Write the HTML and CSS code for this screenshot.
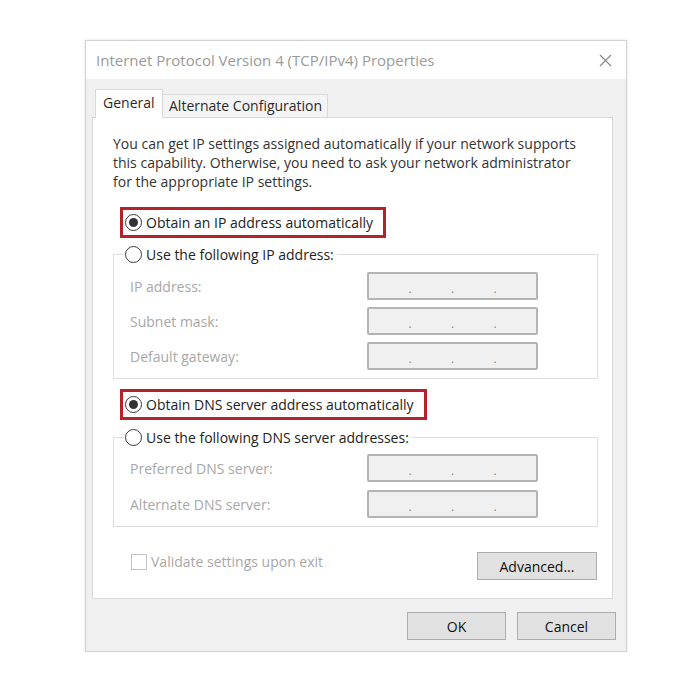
FILE: index.html
```html
<!DOCTYPE html>
<html>
<head>
    <title>Internet Protocol Version 4 (TCP/IPv4) Properties</title>
    <link rel="stylesheet" href="styles.css">
</head>
<body>
    <div class="dialog">
        <div class="titlebar">
            <span class="title">Internet Protocol Version 4 (TCP/IPv4) Properties</span>
            <svg class="close" width="13" height="13" viewBox="0 0 13 13">
                <path d="M1 1 L12 12 M12 1 L1 12" stroke="#8c8c8c" stroke-width="1.3" fill="none"/>
            </svg>
        </div>

        <div class="body">
            <div class="tabs">
                <div class="tab active">General</div>
                <div class="tab">Alternate Configuration</div>
            </div>

            <div class="panel">
                <p class="intro">You can get IP settings assigned automatically if your network supports<br>this capability. Otherwise, you need to ask your network administrator<br>for the appropriate IP settings.</p>

                <div class="choice"><span class="radio checked"></span>Obtain an IP address automatically</div>

                <fieldset class="group">
                    <legend><span class="radio"></span>Use the following IP address:</legend>
                    <div class="rows">
                        <span class="label">IP address:</span>
                        <span class="ip"><i>.</i><i>.</i><i>.</i></span>
                        <span class="label">Subnet mask:</span>
                        <span class="ip"><i>.</i><i>.</i><i>.</i></span>
                        <span class="label">Default gateway:</span>
                        <span class="ip"><i>.</i><i>.</i><i>.</i></span>
                    </div>
                </fieldset>

                <div class="choice"><span class="radio checked"></span>Obtain DNS server address automatically</div>

                <fieldset class="group dns">
                    <legend><span class="radio"></span>Use the following DNS server addresses:</legend>
                    <div class="rows">
                        <span class="label">Preferred DNS server:</span>
                        <span class="ip"><i>.</i><i>.</i><i>.</i></span>
                        <span class="label">Alternate DNS server:</span>
                        <span class="ip"><i>.</i><i>.</i><i>.</i></span>
                    </div>
                </fieldset>

                <div class="options">
                    <div class="check"><span class="box"></span>Validate settings upon exit</div>
                    <button class="btn advanced">Advanced...</button>
                </div>
            </div>

            <div class="footer">
                <button class="btn">OK</button>
                <button class="btn">Cancel</button>
            </div>
        </div>
    </div>
</body>
</html>
```

FILE: styles.css
```css
body {
    margin: 0;
    background: #fff;
    font-family: "Open Sans", sans-serif;
    font-size: 14px;
    color: #2a2a2a;
}
.dialog {
    width: 542px;
    height: 612px;
    box-sizing: border-box;
    margin: 40px 0 0 85px;
    border: 1px solid #d2d2d2;
    background: #f0f0f0;
    box-shadow: 0 0 3px rgba(0, 0, 0, 0.1);
}
.titlebar {
    height: 38px;
    display: flex;
    align-items: center;
    justify-content: space-between;
    padding: 0 14px 0 10px;
    background: #fff;
}
.title {
    font-size: 15px;
    color: #9a9a9a;
}
.body {
    padding: 10px 10px 11px 6px;
}
.tabs {
    display: flex;
    align-items: flex-end;
    margin-left: 3px;
}
.tab {
    height: 23px;
    line-height: 22px;
    padding: 0 6px;
    box-sizing: border-box;
    border: 1px solid #d9d9d9;
    border-bottom: none;
    border-left: none;
    background: #f4f4f4;
    width: 165px;
    white-space: nowrap;
}
.tab.active {
    width: 68px;
    height: 29px;
    line-height: 25px;
    padding: 0 7px;
    margin-bottom: -1px;
    border-left: 1px solid #d9d9d9;
    background: #fff;
    position: relative;
    z-index: 1;
}
.panel {
    height: 482px;
    box-sizing: border-box;
    margin-right: 3px;
    padding: 16px 0 17px 20px;
    border: 1px solid #d9d9d9;
    background: #fff;
}
.intro {
    margin: 0 0 16px;
    line-height: 19px;
    color: #333;
    white-space: nowrap;
}
.choice {
    display: inline-flex;
    align-items: center;
    height: 31px;
    box-sizing: border-box;
    margin-left: 7px;
    padding: 0 10px 0 2px;
    border: 3px solid #b2232b;
    color: #222;
}
.radio {
    width: 17px;
    height: 17px;
    box-sizing: border-box;
    border: 1px solid #3a3a3a;
    border-radius: 50%;
    background: #fff;
    margin-right: 4px;
    display: inline-flex;
    align-items: center;
    justify-content: center;
    flex: none;
}
.radio.checked::after {
    content: "";
    width: 9px;
    height: 9px;
    border-radius: 50%;
    background: #333;
}
.group {
    margin: 8px 14px 10px 0;
    padding: 0;
    border: 1px solid #dedede;
}
.group.dns {
    margin-top: 9px;
    margin-bottom: 0;
}
.group legend {
    display: flex;
    align-items: center;
    height: 17px;
    margin-left: 10px;
    padding: 0 3px 0 1px;
    color: #222;
}
.rows {
    display: grid;
    grid-template-columns: 237px 171px;
    grid-auto-rows: 28px;
    row-gap: 7px;
    align-items: center;
    padding: 9px 0 8px 16px;
}
.dns .rows {
    row-gap: 8px;
    padding-top: 8px;
}
.label {
    color: #a8a8a8;
}
.ip {
    height: 28px;
    box-sizing: border-box;
    border: 2px solid #b4b4b4;
    border-radius: 2px;
    background: #f0f0f0;
    display: flex;
    justify-content: space-evenly;
    align-items: center;
    padding-top: 5px;
}
.ip i {
    font-style: normal;
    font-size: 12px;
    color: #8a8a8a;
}
.options {
    display: flex;
    justify-content: space-between;
    align-items: flex-start;
    margin: 25px 15px 0 18px;
}
.check {
    display: flex;
    align-items: center;
    color: #a8a8a8;
}
.box {
    width: 16px;
    height: 16px;
    box-sizing: border-box;
    border: 1px solid #c4c4c4;
    background: #fff;
    margin-right: 4px;
}
.btn {
    width: 99px;
    height: 28px;
    border: 1px solid #adadad;
    background: #e1e1e1;
    font-family: "Open Sans", sans-serif;
    font-size: 14px;
    color: #111;
    padding: 0;
}
.btn.advanced {
    width: 120px;
}
.footer {
    display: flex;
    justify-content: flex-end;
    gap: 11px;
    margin-top: 13px;
}
```
